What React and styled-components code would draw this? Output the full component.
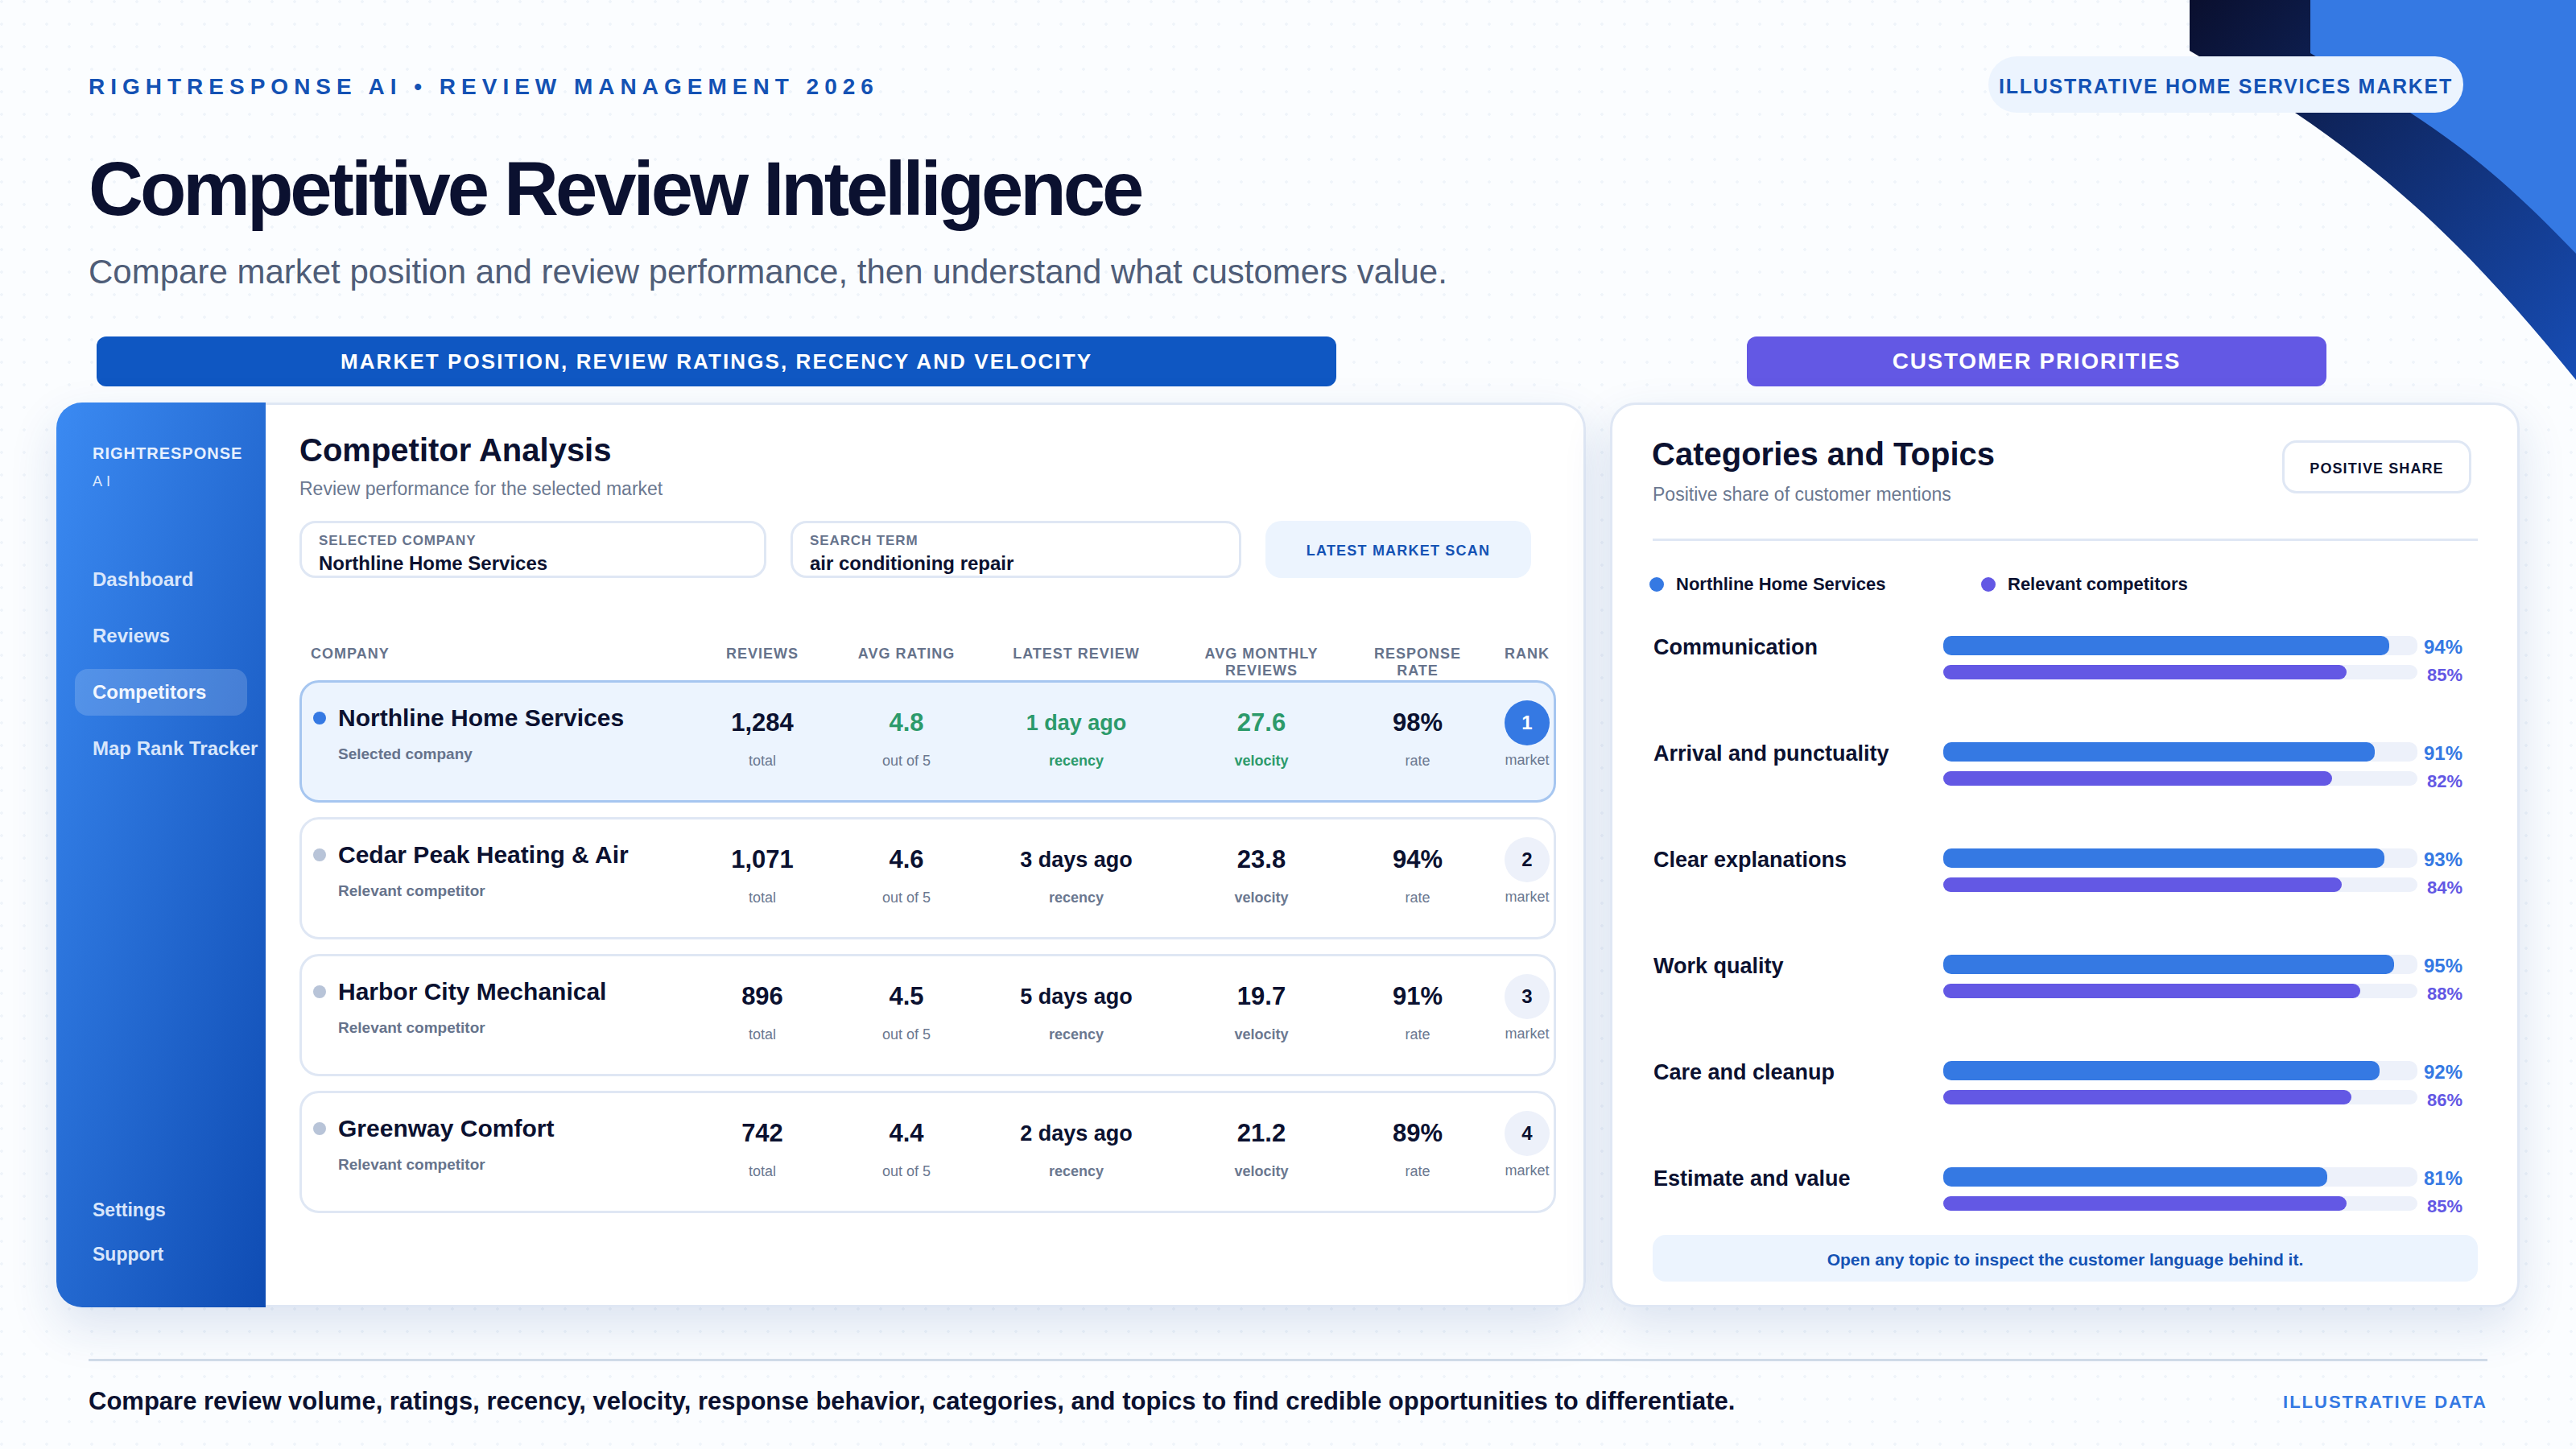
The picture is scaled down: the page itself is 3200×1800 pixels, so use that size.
import React from 'react'
import styled, { createGlobalStyle } from 'styled-components'

const GlobalStyle = createGlobalStyle`
    * { box-sizing: border-box; }
    html, body { margin: 0; padding: 0; }
    body { font-family: "Liberation Sans", Arial, sans-serif; color: #0b1130; }
`

const competitors = [
    { name: 'Northline Home Services', note: 'Selected company', reviews: '1,284', rating: '4.8', latest: '1 day ago', velocity: '27.6', rate: '98%', rank: 1, selected: true },
    { name: 'Cedar Peak Heating & Air', note: 'Relevant competitor', reviews: '1,071', rating: '4.6', latest: '3 days ago', velocity: '23.8', rate: '94%', rank: 2 },
    { name: 'Harbor City Mechanical', note: 'Relevant competitor', reviews: '896', rating: '4.5', latest: '5 days ago', velocity: '19.7', rate: '91%', rank: 3 },
    { name: 'Greenway Comfort', note: 'Relevant competitor', reviews: '742', rating: '4.4', latest: '2 days ago', velocity: '21.2', rate: '89%', rank: 4 },
]

const topics = [
    { label: 'Communication', own: 94, rival: 85 },
    { label: 'Arrival and punctuality', own: 91, rival: 82 },
    { label: 'Clear explanations', own: 93, rival: 84 },
    { label: 'Work quality', own: 95, rival: 88 },
    { label: 'Care and cleanup', own: 92, rival: 86 },
    { label: 'Estimate and value', own: 81, rival: 85 },
]

const Corner = () => (
    <CornerArt viewBox="0 0 480 480">
        <defs>
            <linearGradient id="cornerDark" x1="0" y1="0" x2="1" y2="1">
                <stop offset="0" stopColor="#0a0f2e" />
                <stop offset="1" stopColor="#174db5" />
            </linearGradient>
        </defs>
        <path d="M0 0H480V472C372 339 275 237 131 140L0 63Z" fill="url(#cornerDark)" />
        <path d="M150 0H480V315C400 232 350 190 274 140L150 66Z" fill="#3579e3" />
    </CornerArt>
)

const App = () => {
    return (
        <Page>
            <GlobalStyle />
            <Corner />
            <Header>
                <Eyebrow>RIGHTRESPONSE AI • REVIEW MANAGEMENT 2026</Eyebrow>
                <MarketPill>ILLUSTRATIVE HOME SERVICES MARKET</MarketPill>
            </Header>
            <Title>Competitive Review Intelligence</Title>
            <Subtitle>Compare market position and review performance, then understand what customers value.</Subtitle>
            <Banners>
                <Banner>MARKET POSITION, REVIEW RATINGS, RECENCY AND VELOCITY</Banner>
                <Banner $violet>CUSTOMER PRIORITIES</Banner>
            </Banners>
            <Panels>
                <AppPanel>
                    <Sidebar>
                        <Brand>RIGHTRESPONSE</Brand>
                        <BrandSub>AI</BrandSub>
                        <Nav>
                            <NavItem>Dashboard</NavItem>
                            <NavItem>Reviews</NavItem>
                            <NavItem $active>Competitors</NavItem>
                            <NavItem>Map Rank Tracker</NavItem>
                        </Nav>
                        <SideFoot>
                            <SideLink>Settings</SideLink>
                            <SideLink>Support</SideLink>
                        </SideFoot>
                    </Sidebar>
                    <Analysis>
                        <PanelTitle>Competitor Analysis</PanelTitle>
                        <PanelSub>Review performance for the selected market</PanelSub>
                        <Filters>
                            <Field $width={580}>
                                <FieldLabel>SELECTED COMPANY</FieldLabel>
                                <FieldValue>Northline Home Services</FieldValue>
                            </Field>
                            <Field $width={560}>
                                <FieldLabel>SEARCH TERM</FieldLabel>
                                <FieldValue>air conditioning repair</FieldValue>
                            </Field>
                            <ScanButton>LATEST MARKET SCAN</ScanButton>
                        </Filters>
                        <TableHead>
                            <HeadCell $left>COMPANY</HeadCell>
                            <HeadCell>REVIEWS</HeadCell>
                            <HeadCell>AVG RATING</HeadCell>
                            <HeadCell>LATEST REVIEW</HeadCell>
                            <HeadCell>AVG MONTHLY<br />REVIEWS</HeadCell>
                            <HeadCell>RESPONSE<br />RATE</HeadCell>
                            <HeadCell>RANK</HeadCell>
                        </TableHead>
                        <Rows>
                            {competitors.map((c) => (
                                <Row key={c.name} $selected={c.selected}>
                                    <Company>
                                        <NameLine>
                                            <Dot $selected={c.selected} />
                                            <Name>{c.name}</Name>
                                        </NameLine>
                                        <Note>{c.note}</Note>
                                    </Company>
                                    <Metric>
                                        <Value>{c.reviews}</Value>
                                        <Unit>total</Unit>
                                    </Metric>
                                    <Metric>
                                        <Value $good={c.selected}>{c.rating}</Value>
                                        <Unit>out of 5</Unit>
                                    </Metric>
                                    <Metric>
                                        <Value $good={c.selected} $small>{c.latest}</Value>
                                        <Unit $strong $good={c.selected}>recency</Unit>
                                    </Metric>
                                    <Metric>
                                        <Value $good={c.selected}>{c.velocity}</Value>
                                        <Unit $strong $good={c.selected}>velocity</Unit>
                                    </Metric>
                                    <Metric>
                                        <Value>{c.rate}</Value>
                                        <Unit>rate</Unit>
                                    </Metric>
                                    <Metric>
                                        <RankBadge $selected={c.selected}>{c.rank}</RankBadge>
                                        <RankUnit>market</RankUnit>
                                    </Metric>
                                </Row>
                            ))}
                        </Rows>
                    </Analysis>
                </AppPanel>
                <TopicsPanel>
                    <TopicsHead>
                        <div>
                            <TopicsTitle>Categories and Topics</TopicsTitle>
                            <TopicsSub>Positive share of customer mentions</TopicsSub>
                        </div>
                        <ShareChip>POSITIVE SHARE</ShareChip>
                    </TopicsHead>
                    <Legend>
                        <LegendItem $width={412}><LegendDot />Northline Home Services</LegendItem>
                        <LegendItem><LegendDot $violet />Relevant competitors</LegendItem>
                    </Legend>
                    <TopicList>
                        {topics.map((t) => (
                            <Topic key={t.label}>
                                <TopicLabel>{t.label}</TopicLabel>
                                <Bars>
                                    <BarLine $height={24}>
                                        <Track><Fill style={{ width: `${t.own}%` }} /></Track>
                                        <Percent>{t.own}%</Percent>
                                    </BarLine>
                                    <BarLine $height={18} $violet>
                                        <Track><Fill $violet style={{ width: `${t.rival}%` }} /></Track>
                                        <Percent $violet>{t.rival}%</Percent>
                                    </BarLine>
                                </Bars>
                            </Topic>
                        ))}
                    </TopicList>
                    <Hint>Open any topic to inspect the customer language behind it.</Hint>
                </TopicsPanel>
            </Panels>
            <Footer>
                <FooterText>Compare review volume, ratings, recency, velocity, response behavior, categories, and topics to find credible opportunities to differentiate.</FooterText>
                <FooterTag>ILLUSTRATIVE DATA</FooterTag>
            </Footer>
        </Page>
    )
}

export default App

const Page = styled.div`
    position: relative;
    width: 3200px;
    height: 1800px;
    overflow: hidden;
    padding-top: 70px;
    background-color: #fbfdff;
    background-image: radial-gradient(circle at 2px 2px, #eff4fa 1.5px, transparent 2px);
    background-size: 28px 28px;
`

const CornerArt = styled.svg`
    position: absolute;
    top: 0;
    right: 0;
    width: 480px;
    height: 480px;
`

const Header = styled.header`
    position: relative;
    display: flex;
    justify-content: space-between;
    align-items: center;
    height: 70px;
    padding: 0 140px 0 110px;
`

const Eyebrow = styled.div`
    padding-top: 5px;
    font-size: 28px;
    font-weight: 700;
    letter-spacing: 7px;
    color: #1452b4;
`

const MarketPill = styled.div`
    display: flex;
    justify-content: center;
    align-items: center;
    width: 590px;
    height: 70px;
    padding-top: 5px;
    border-radius: 35px;
    background: #ecf4fe;
    font-size: 25px;
    font-weight: 700;
    letter-spacing: 1.76px;
    color: #1452b4;
`

const Title = styled.h1`
    position: relative;
    margin: 42px 0 0 110px;
    font-size: 94px;
    line-height: 106px;
    font-weight: 700;
    letter-spacing: -4px;
    color: #0b1130;
`

const Subtitle = styled.p`
    position: relative;
    margin: 23px 0 0 110px;
    font-size: 42px;
    line-height: 54px;
    color: #4f5d78;
`

const Banners = styled.div`
    position: relative;
    display: flex;
    margin-top: 53px;
    padding-left: 120px;
    gap: 510px;
`

const Banner = styled.div`
    display: flex;
    justify-content: center;
    align-items: center;
    width: ${(p) => (p.$violet ? '720px' : '1540px')};
    height: 62px;
    border-radius: 12px;
    background: ${(p) => (p.$violet ? '#6358e4' : '#0f57c2')};
    color: #fff;
    font-size: ${(p) => (p.$violet ? '28px' : '26px')};
    font-weight: 700;
    letter-spacing: ${(p) => (p.$violet ? '1.7px' : '2.1px')};
`

const Panels = styled.div`
    position: relative;
    display: flex;
    gap: 30px;
    margin-top: 20px;
    padding-left: 70px;
`

const AppPanel = styled.section`
    display: flex;
    width: 1900px;
    height: 1124px;
    border-radius: 32px;
    box-shadow: 0 24px 60px rgba(30, 70, 150, 0.14);
`

const Sidebar = styled.aside`
    display: flex;
    flex-direction: column;
    flex: none;
    width: 260px;
    padding: 50px 0 0 23px;
    border-radius: 32px 0 0 32px;
    background: linear-gradient(105deg, #3b8af2, #0f4cb3);
`

const Brand = styled.div`
    padding-left: 22px;
    font-size: 20px;
    line-height: 26px;
    font-weight: 700;
    letter-spacing: 1px;
    color: #e6f0ff;
`

const BrandSub = styled.div`
    margin-top: 10px;
    padding-left: 22px;
    font-size: 18px;
    line-height: 24px;
    letter-spacing: 5px;
    color: #dbe8fd;
`

const Nav = styled.nav`
    display: flex;
    flex-direction: column;
    gap: 12px;
    margin-top: 81px;
`

const NavItem = styled.div`
    display: flex;
    align-items: center;
    width: 214px;
    height: 58px;
    padding-left: 22px;
    border-radius: 16px;
    background: ${(p) => (p.$active ? 'rgba(255, 255, 255, 0.17)' : 'transparent')};
    font-size: 24px;
    font-weight: 700;
    white-space: nowrap;
    color: ${(p) => (p.$active ? '#f2f7ff' : '#d8e6fb')};
`

const SideFoot = styled.div`
    display: flex;
    flex-direction: column;
    gap: 27px;
    margin-top: auto;
    padding: 0 0 52px 22px;
`

const SideLink = styled.div`
    font-size: 23px;
    line-height: 28px;
    font-weight: 700;
    color: #d8e6fb;
`

const Analysis = styled.div`
    flex: 1;
    padding: 31px 0 0 42px;
    border: 3px solid #dfe7f4;
    border-left: 0;
    border-radius: 0 32px 32px 0;
    background: #fff;
`

const PanelTitle = styled.h2`
    margin: 0;
    font-size: 40px;
    line-height: 50px;
    font-weight: 700;
    color: #0b1130;
`

const PanelSub = styled.p`
    margin: 8px 0 0;
    font-size: 23px;
    line-height: 30px;
    color: #6b7890;
`

const Filters = styled.div`
    display: flex;
    align-items: stretch;
    gap: 30px;
    height: 71px;
    margin-top: 25px;
`

const Field = styled.div`
    width: ${(p) => p.$width}px;
    padding: 12px 21px 0;
    border: 3px solid #dfe7f4;
    border-radius: 20px;
    background: #fff;
`

const FieldLabel = styled.div`
    font-size: 17px;
    line-height: 20px;
    font-weight: 700;
    letter-spacing: 0.9px;
    color: #66738c;
`

const FieldValue = styled.div`
    margin-top: 3px;
    font-size: 24px;
    line-height: 30px;
    font-weight: 700;
    color: #0b1130;
`

const ScanButton = styled.div`
    display: flex;
    justify-content: center;
    align-items: center;
    width: 330px;
    padding-top: 3px;
    border-radius: 20px;
    background: #ecf4fe;
    font-size: 18px;
    font-weight: 700;
    letter-spacing: 1.2px;
    color: #1452b4;
`

const TableHead = styled.div`
    display: grid;
    grid-template-columns: 449px 224px 134px 288px 172px 216px 56px;
    height: 43px;
    margin-top: 84px;
    padding-left: 14px;
`

const HeadCell = styled.div`
    position: relative;
    text-align: ${(p) => (p.$left ? 'left' : 'center')};
    font-size: 18px;
    line-height: 21px;
    font-weight: 700;
    letter-spacing: 1px;
    white-space: nowrap;
    color: #66738c;
`

const Rows = styled.div`
    display: flex;
    flex-direction: column;
    gap: 18px;
`

const Row = styled.div`
    display: grid;
    grid-template-columns: 446px 224px 134px 288px 172px 216px 56px;
    width: 1561px;
    height: 152px;
    padding: 22px 0 0 14px;
    border: 3px solid ${(p) => (p.$selected ? '#a6c6f0' : '#dfe7f4')};
    border-radius: 24px;
    background: ${(p) => (p.$selected ? '#ecf4fe' : '#fff')};
`

const Company = styled.div`
    padding-top: 4px;
`

const NameLine = styled.div`
    display: flex;
    align-items: center;
    gap: 15px;
    height: 36px;
`

const Dot = styled.span`
    flex: none;
    width: 16px;
    height: 16px;
    border-radius: 50%;
    background: ${(p) => (p.$selected ? '#3579e3' : '#b8c4d8')};
`

const Name = styled.div`
    font-size: 30px;
    font-weight: 700;
    white-space: nowrap;
    color: #0b1130;
`

const Note = styled.div`
    margin: 15px 0 0 31px;
    font-size: 19px;
    line-height: 24px;
    font-weight: 700;
    color: #66738c;
`

const Metric = styled.div`
    display: flex;
    flex-direction: column;
    align-items: center;
`

const Value = styled.div`
    margin-top: 11px;
    font-size: ${(p) => (p.$small ? '27px' : '31px')};
    line-height: 34px;
    font-weight: 700;
    white-space: nowrap;
    color: ${(p) => (p.$good ? '#2c9a6b' : '#0b1130')};
`

const Unit = styled.div`
    margin-top: 19px;
    font-size: 18px;
    line-height: 22px;
    font-weight: ${(p) => (p.$strong ? 700 : 400)};
    color: ${(p) => (p.$good ? '#2c9a6b' : '#6b7890')};
`

const RankBadge = styled.div`
    display: flex;
    justify-content: center;
    align-items: center;
    width: 56px;
    height: 56px;
    border-radius: 50%;
    background: ${(p) => (p.$selected ? '#3579e3' : '#edf1fa')};
    font-size: 24px;
    font-weight: 700;
    color: ${(p) => (p.$selected ? '#fff' : '#0b1130')};
`

const RankUnit = styled.div`
    margin-top: 7px;
    font-size: 18px;
    line-height: 22px;
    color: #6b7890;
`

const TopicsPanel = styled.section`
    display: flex;
    flex-direction: column;
    width: 1130px;
    height: 1124px;
    padding: 36px 49px 29px 50px;
    border: 3px solid #dfe7f4;
    border-radius: 32px;
    background: #fff;
    box-shadow: 0 24px 60px rgba(30, 70, 150, 0.14);
`

const TopicsHead = styled.div`
    display: flex;
    justify-content: space-between;
    align-items: flex-start;
    height: 133px;
    padding-right: 8px;
    border-bottom: 3px solid #dfe7f4;
`

const TopicsTitle = styled.h2`
    margin: 0 0 0 -1px;
    font-size: 40px;
    line-height: 50px;
    font-weight: 700;
    color: #0b1130;
`

const TopicsSub = styled.p`
    margin: 10px 0 0;
    font-size: 23px;
    line-height: 30px;
    color: #6b7890;
`

const ShareChip = styled.div`
    display: flex;
    justify-content: center;
    align-items: center;
    flex: none;
    width: 235px;
    height: 66px;
    margin-top: 8px;
    padding-top: 5px;
    border: 3px solid #dfe7f4;
    border-radius: 18px;
    font-size: 18px;
    font-weight: 700;
    letter-spacing: 1.1px;
    color: #0b1130;
`

const Legend = styled.div`
    display: flex;
    align-items: center;
    height: 28px;
    margin-top: 40px;
`

const LegendItem = styled.div`
    display: flex;
    align-items: center;
    gap: 15px;
    width: ${(p) => (p.$width ? `${p.$width}px` : 'auto')};
    font-size: 22px;
    font-weight: 700;
    color: #0b1130;
`

const LegendDot = styled.span`
    flex: none;
    width: 18px;
    height: 18px;
    margin-left: -4px;
    border-radius: 50%;
    background: ${(p) => (p.$violet ? '#6358e4' : '#3579e3')};
`

const TopicList = styled.div`
    display: flex;
    flex-direction: column;
    gap: 78px;
    margin-top: 50px;
`

const Topic = styled.div`
    display: grid;
    grid-template-columns: 361px 1fr;
    height: 54px;
`

const TopicLabel = styled.div`
    padding-left: 1px;
    font-size: 27px;
    line-height: 28px;
    font-weight: 700;
    color: #0b1130;
`

const Bars = styled.div`
    display: flex;
    flex-direction: column;
    gap: 12px;
`

const BarLine = styled.div`
    display: grid;
    grid-template-columns: 589px 56px;
    grid-template-rows: ${(p) => p.$height}px;
    height: ${(p) => p.$height}px;
    line-height: ${(p) => (p.$violet ? '26px' : '28px')};
`

const Track = styled.div`
    border-radius: 10px;
    background: #edf1fa;
`

const Fill = styled.div`
    height: 100%;
    border-radius: 10px;
    background: ${(p) => (p.$violet ? '#6358e4' : '#3579e3')};
`

const Percent = styled.div`
    text-align: right;
    font-size: ${(p) => (p.$violet ? '22px' : '24px')};
    font-weight: 700;
    color: ${(p) => (p.$violet ? '#6358e4' : '#3579e3')};
`

const Hint = styled.div`
    display: flex;
    justify-content: center;
    align-items: center;
    height: 58px;
    margin-top: 30px;
    padding-top: 3px;
    border-radius: 16px;
    background: #ecf4fe;
    font-size: 21px;
    font-weight: 700;
    color: #1452b4;
`

const Footer = styled.footer`
    position: relative;
    display: flex;
    justify-content: space-between;
    align-items: center;
    width: 2980px;
    height: 96px;
    margin: 64px 0 0 110px;
    padding-top: 6px;
    border-top: 3px solid #cfdae8;
`

const FooterText = styled.div`
    font-size: 31px;
    font-weight: 700;
    color: #0b1130;
`

const FooterTag = styled.div`
    padding-top: 3px;
    font-size: 22px;
    font-weight: 700;
    letter-spacing: 2px;
    color: #3579e3;
`
